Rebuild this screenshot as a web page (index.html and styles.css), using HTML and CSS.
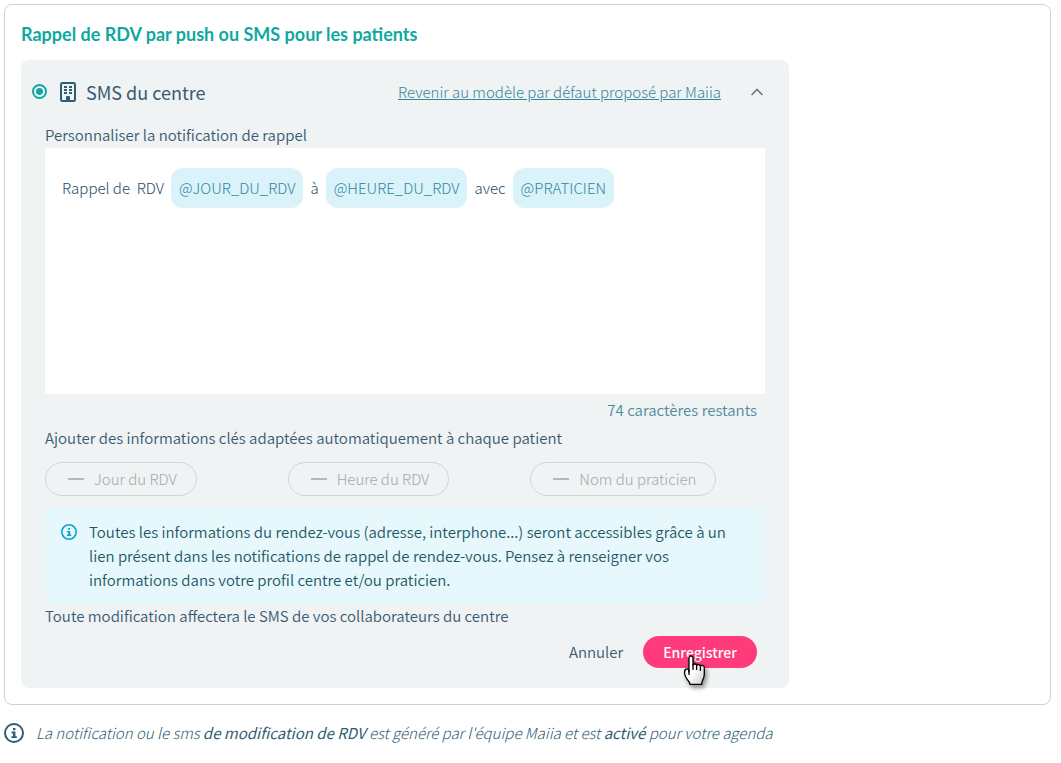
FILE: index.html
```html
<!DOCTYPE html>
<html lang="fr">

<head>
    <meta charset="UTF-8">
    <title>Rappel de RDV</title>
    <link rel="stylesheet" href="styles.css">
</head>

<body>
    <main class="card">
        <h1 class="card-title">Rappel de RDV par push ou SMS pour les patients</h1>

        <form class="panel">
            <div class="panel-header">
                <input type="radio" name="model" id="centre" class="radio" checked>
                <label for="centre" class="panel-name">
                    <svg width="16" height="20" viewBox="0 0 16 20" aria-hidden="true">
                        <rect x="1" y="1" width="14" height="18" rx="1.5" fill="none" stroke="#2f5d73" stroke-width="2"/>
                        <path fill="#2f5d73" d="M4 4h3v2H4zM9 4h3v2H9zM4 7h3v2H4zM9 7h3v2H9zM4 10h3v2H4zM9 10h3v2H9zM6 19v-4q0-1 1-1h2q1 0 1 1v4z"/>
                    </svg>
                    SMS du centre
                </label>
                <a href="#" class="reset-link">Revenir au modèle par défaut proposé par Maiia</a>
                <button type="button" class="toggle" aria-label="Replier">
                    <svg width="12" height="8" viewBox="0 0 12 8" fill="none" stroke="#707577" stroke-width="1.6" aria-hidden="true">
                        <path d="M.6 7L6 1.4 11.4 7"/>
                    </svg>
                </button>
            </div>

            <div class="panel-body">
                <p id="editor-label">Personnaliser la notification de rappel</p>
                <div class="editor" contenteditable="true" role="textbox" aria-multiline="true" aria-labelledby="editor-label">
                    <span>Rappel de&nbsp; RDV</span>
                    <span class="tag">@JOUR_DU_RDV</span>
                    <span>à</span>
                    <span class="tag">@HEURE_DU_RDV</span>
                    <span>avec</span>
                    <span class="tag">@PRATICIEN</span>
                </div>
                <p class="counter">74 caractères restants</p>

                <p>Ajouter des informations clés adaptées automatiquement à chaque patient</p>
                <div class="pills">
                    <button type="button" class="pill" disabled>Jour du RDV</button>
                    <button type="button" class="pill" disabled>Heure du RDV</button>
                    <button type="button" class="pill" disabled>Nom du praticien</button>
                </div>

                <div class="info">
                    <svg class="info-icon" width="16" height="16" viewBox="0 0 20 20" aria-hidden="true">
                        <circle cx="10" cy="10" r="9" fill="none" stroke="currentColor" stroke-width="2"/>
                        <path fill="currentColor" d="M9 5h2.4v2.2H9zM7.6 8.6h3.8v4.6h1.4V15H7.4v-1.8H9v-2.8H7.6z"/>
                    </svg>
                    <p>Toutes les informations du rendez-vous (adresse, interphone...) seront accessibles grâce à un lien présent dans les notifications de rappel de rendez-vous. Pensez à renseigner vos informations dans votre profil centre et/ou praticien.</p>
                </div>
                <p>Toute modification affectera le SMS de vos collaborateurs du centre</p>

                <div class="actions">
                    <button type="button" class="btn">Annuler</button>
                    <div class="save">
                        <button type="submit" class="btn btn-primary">Enregistrer</button>
                        <svg class="cursor" width="24" height="33" viewBox="0 0 24 33" aria-hidden="true">
                            <defs>
                                <linearGradient id="hand" x1="0" y1="0" x2="1" y2="1">
                                    <stop offset=".5" stop-color="#fff"/>
                                    <stop offset="1" stop-color="#ccc"/>
                                </linearGradient>
                            </defs>
                            <path fill="url(#hand)" stroke="#000" stroke-width="1.3" stroke-linejoin="round" d="M6 17V3q0-2 2-2t2 2v7q0-1 1.8-1t1.8 1.5q.2-1 1.9-1t1.9 1.8q.2-1 1.9-1t2 2v7q0 3-1.5 5.5-1 2-1 4.5H7q-.5-2.5-2.5-4.5-3-3.5-3-7t2-3.800Q5.500 13 6 17z"/>
                            <path fill="none" stroke="#000" stroke-width="1.3" d="M6 15v5M10 9v6M13.6 10.5V15M17.4 11.5V16"/>
                        </svg>
                    </div>
                </div>
            </div>
        </form>
    </main>

    <footer class="note">
        <svg width="20" height="20" viewBox="0 0 20 20" aria-hidden="true">
            <circle cx="10" cy="10" r="9" fill="none" stroke="currentColor" stroke-width="2"/>
            <path fill="currentColor" d="M9 5h2.4v2.2H9zM7.6 8.6h3.8v4.6h1.4V15H7.4v-1.8H9v-2.8H7.6z"/>
        </svg>
        <p>La notification ou le sms <strong>de modification de RDV</strong> est généré par l'équipe Maiia et est <strong>activé</strong> pour votre agenda</p>
    </footer>
</body>

</html>
```
FILE: styles.css
```css
* {
    box-sizing: border-box;
}

body {
    margin: 4px 10px 4px 4px;
    background-color: #fff;
    color: #3a5a72;
    font-family: "Noto Sans CJK JP", "Noto Sans", sans-serif;
    font-size: 15px;
    font-weight: 350;
    line-height: 24px;
}

p {
    margin: 0;
}

svg {
    display: block;
    flex: none;
}

button {
    font: inherit;
    cursor: pointer;
}

.card {
    padding: 16px;
    border: 1px solid #c9d3de;
    border-radius: 8px;
}

.card-title {
    margin: 0 0 12px;
    color: #0fa8a0;
    font-family: Lato, sans-serif;
    font-size: 18px;
    line-height: 27px;
}

.panel {
    max-width: 768px;
    padding-bottom: 20px;
    border-radius: 8px;
    background-color: #eff3f4;
}

.panel-header {
    display: flex;
    align-items: center;
    height: 63px;
    padding: 0 26px 0 11px;
}

.radio {
    appearance: none;
    width: 15px;
    height: 15px;
    margin: 0 13px 0 0;
    border: 2px solid #0fa8a0;
    border-radius: 50%;
    background: radial-gradient(circle, #0fa8a0 3px, transparent 4px);
}

.panel-name {
    display: flex;
    gap: 10px;
    align-items: center;
    font-size: 18px;
    font-weight: 400;
}

.reset-link {
    margin-left: auto;
    color: #33879a;
    font-weight: 300;
}

.toggle {
    margin-left: 30px;
    padding: 0;
    border: 0;
    background: none;
}

.panel-body {
    padding: 0 24px;
}

.editor {
    display: flex;
    flex-wrap: wrap;
    gap: 7px;
    align-items: center;
    align-content: flex-start;
    min-height: 246px;
    margin-top: 1px;
    padding: 20px 17px;
    background-color: #fff;
    color: #2a4a62;
    font-weight: 300;
}

.tag {
    padding: 8px;
    border-radius: 12px;
    background-color: #daf3fb;
    color: #33879a;
}

.counter {
    padding: 4px 8px;
    color: #4f8a9c;
    text-align: right;
}

.pills {
    display: grid;
    grid-template-columns: repeat(3, 1fr);
    gap: 8px;
    margin: 12px 0;
}

.pill {
    display: flex;
    gap: 10px;
    align-items: center;
    justify-self: start;
    height: 34px;
    padding: 0 19px 0 22px;
    border: 1px solid #d0d5d7;
    border-radius: 17px;
    background: none;
    color: #a4a8ab;
    font-weight: 300;
    cursor: default;
}

.pill::before {
    content: "";
    width: 16px;
    height: 2px;
    background-color: #b3b7ba;
}

.info {
    display: flex;
    gap: 12px;
    padding: 12px 32px 12px 16px;
    border-radius: 8px;
    background-color: #e6f8fc;
    color: #245766;
}

.info-icon {
    margin-top: 4px;
    color: #0aa3c9;
}

.actions {
    display: flex;
    justify-content: flex-end;
    margin-top: 8px;
    padding-right: 8px;
}

.btn {
    height: 32px;
    padding: 0 20px;
    border: 0;
    border-radius: 16px;
    background: none;
    color: inherit;
}

.btn-primary {
    background-color: #ff3b7c;
    color: #fff;
    font-size: 14px;
    font-weight: 500;
}

.save {
    position: relative;
}

.cursor {
    position: absolute;
    top: 19px;
    left: 40px;
    filter: drop-shadow(2px 3px 2px rgba(0, 0, 0, 0.4));
    pointer-events: none;
}

.note {
    display: flex;
    gap: 12px;
    align-items: center;
    margin-top: 16px;
    color: #2f5d73;
    font-style: italic;
    font-weight: 300;
}
```
